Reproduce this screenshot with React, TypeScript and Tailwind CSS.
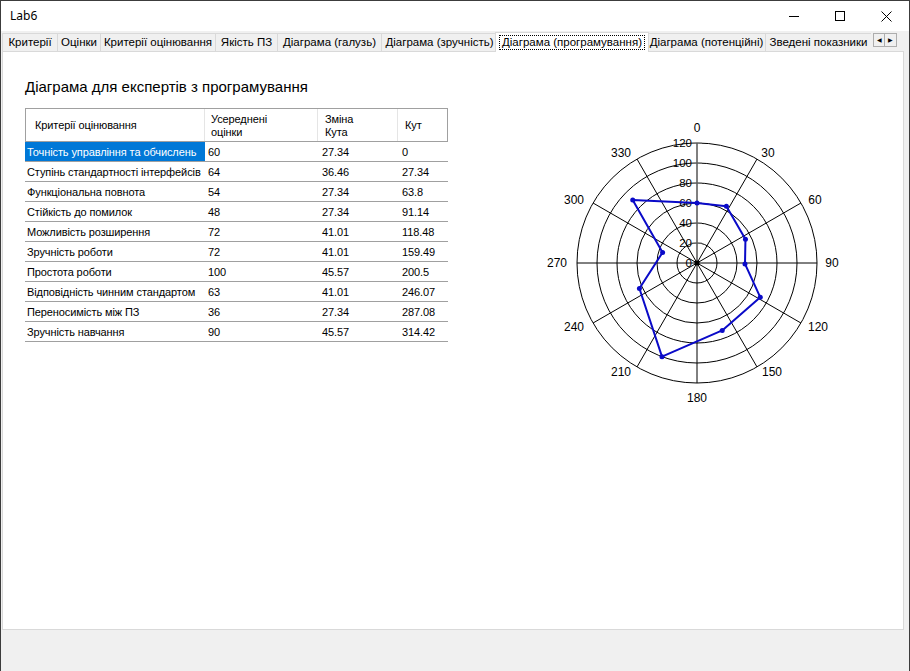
import React from "react";

const tabs = [
  { label: "Критерії", w: 55 },
  { label: "Оцінки", w: 43 },
  { label: "Критерії оцінювання", w: 115 },
  { label: "Якість ПЗ", w: 62 },
  { label: "Діаграма (галузь)", w: 104 },
  { label: "Діаграма (зручність)", w: 116 },
  { label: "Діаграма (програмування)", w: 150, active: true },
  { label: "Діаграма (потенційні)", w: 118 },
  { label: "Зведені показники", w: 106 },
];

const rows = [
  ["Точність управління та обчислень", "60", "27.34", "0"],
  ["Ступінь стандартності інтерфейсів", "64", "36.46", "27.34"],
  ["Функціональна повнота", "54", "27.34", "63.8"],
  ["Стійкість до помилок", "48", "27.34", "91.14"],
  ["Можливість розширення", "72", "41.01", "118.48"],
  ["Зручність роботи", "72", "41.01", "159.49"],
  ["Простота роботи", "100", "45.57", "200.5"],
  ["Відповідність чинним стандартом", "63", "41.01", "246.07"],
  ["Переносимість між ПЗ", "36", "27.34", "287.08"],
  ["Зручність навчання", "90", "45.57", "314.42"],
];

// chart origin inside svg
const CX = 157;
const CY = 155;

const axisLabels: [string, number, number][] = [
  ["0", 697, 128],
  ["30", 768, 153],
  ["60", 815, 200],
  ["90", 832, 263],
  ["120", 818, 327],
  ["150", 772, 372],
  ["180", 697, 398],
  ["210", 621, 372],
  ["240", 574, 327],
  ["270", 557, 263],
  ["300", 574, 200],
  ["330", 621, 153],
];

const PolarChart = () => {
  const pts = rows.map((r) => {
    const v = parseFloat(r[1]);
    const a = (parseFloat(r[3]) * Math.PI) / 180;
    return [CX + v * Math.sin(a), CY - v * Math.cos(a)];
  });
  const poly = pts.map((p) => p.join(",")).join(" ");
  return (
    <svg width="330" height="300" viewBox="0 0 330 300" className="shrink-0" style={{ fontFamily: '"Liberation Sans", Arial, sans-serif' }}>
      {[20, 40, 60, 80, 100, 120].map((r) => (
        <circle key={r} cx={CX} cy={CY} r={r} fill="none" stroke="#000" strokeWidth="1" />
      ))}
      {Array.from({ length: 12 }).map((_, i) => {
        const a = (i * 30 * Math.PI) / 180;
        return (
          <line key={i} x1={CX} y1={CY} x2={CX + 120 * Math.sin(a)} y2={CY - 120 * Math.cos(a)} stroke="#000" strokeWidth="1" />
        );
      })}
      {[0, 20, 40, 60, 80, 100, 120].map((r) => (
        <g key={r}>
          <line x1={CX - 7} y1={CY - r} x2={CX + 5} y2={CY - r} stroke="#8a8a8a" strokeWidth="1" />
          <text x={CX - 5} y={CY - r} fontSize="11.5" textAnchor="end" dominantBaseline="central" fill="#000">
            {r}
          </text>
        </g>
      ))}
      {axisLabels.map(([t, x, y]) => (
        <text key={t} x={x - 540} y={y - 108} fontSize="12" textAnchor="middle" dominantBaseline="central" fill="#000">
          {t}
        </text>
      ))}
      <polygon points={poly} fill="none" stroke="#0a0ac8" strokeWidth="2" strokeLinejoin="round" />
      {pts.map((p, i) => (
        <circle key={i} cx={p[0]} cy={p[1]} r="2.5" fill="#0a0ac8" />
      ))}
      <circle cx={CX} cy={CY} r="2.5" fill="#000" />
    </svg>
  );
};

const App = () => {
  return (
    <div
      className="w-[910px] h-[671px] bg-[#f0f0f0] border-x border-t border-[#3c3c3c] flex flex-col overflow-hidden text-black"
      style={{ fontFamily: '"Liberation Sans", Arial, sans-serif' }}
    >
      {/* title bar */}
      <div className="h-[30px] bg-white flex items-center shrink-0">
        <span className="pl-[9px] text-[12px] text-black" style={{ fontFamily: '"Noto Sans", "Open Sans", sans-serif' }}>
          Lab6
        </span>
        <div className="ml-auto flex h-full">
          <div className="w-[46px] h-full flex items-center justify-center">
            <div className="w-[10px] h-px bg-black" />
          </div>
          <div className="w-[46px] h-full flex items-center justify-center">
            <div className="w-[10px] h-[10px] border border-black" />
          </div>
          <div className="w-[46px] h-full flex items-center justify-center">
            <svg width="11" height="11" viewBox="0 0 11 11">
              <path d="M0.5 0.5 L10.5 10.5 M10.5 0.5 L0.5 10.5" stroke="#000" strokeWidth="1" />
            </svg>
          </div>
        </div>
      </div>

      {/* tab strip */}
      <div className="h-[20px] flex items-end pl-px shrink-0 relative">
        {tabs.map((t) =>
          t.active ? (
            <div
              key={t.label}
              className="h-[20px] bg-white border-x border-t border-[#d9d9d9] flex items-start justify-center pt-[2px] -mx-[2px] relative z-10 -mb-px"
              style={{ width: t.w + 4 }}
            >
              <span className="border border-dotted border-black px-[2px] text-[11.5px] leading-[13px] whitespace-nowrap">{t.label}</span>
            </div>
          ) : (
            <div
              key={t.label}
              className="h-[18px] bg-[#f0f0f0] border-l border-t border-[#d9d9d9] flex items-center justify-center pt-px text-[11.5px] whitespace-nowrap"
              style={{ width: t.w }}
            >
              {t.label}
            </div>
          )
        )}
        <div className="ml-[2px] mb-[4px] flex self-end">
          <div className="w-[12px] h-[14px] border border-[#adadad] bg-[#f0f0f0] flex items-center justify-center text-[6px] leading-none">◀</div>
          <div className="w-[12px] h-[14px] border border-l-0 border-[#adadad] bg-[#f0f0f0] flex items-center justify-center text-[6px] leading-none">▶</div>
        </div>
      </div>

      {/* tab page */}
      <div className="ml-px w-[902px] h-[579px] bg-white border border-[#d9d9d9] shrink-0 flex flex-col pl-[22px] pt-[26px]">
        <h1 className="text-[15px] leading-[18px] font-normal">Діаграма для експертів з програмування</h1>

        <div className="flex mt-[12px]">
          {/* grid table */}
          <div className="w-[423px] shrink-0 text-[11px] tracking-[-0.1px]">
            <div className="flex h-[34px] border-t border-x border-[#a0a0a0] border-b border-b-[#a0a0a0]">
              <div className="w-[179px] flex items-center pl-[9px] pt-px border-r border-[#e5e5e5]">Критерії оцінювання</div>
              <div className="w-[113px] flex items-center pl-[6px] pt-px leading-[13px] border-r border-[#e5e5e5]">
                Усереднені
                <br />
                оцінки
              </div>
              <div className="w-[80px] flex items-center pl-[7px] pt-px leading-[13px] border-r border-[#e5e5e5]">
                Зміна
                <br />
                Кута
              </div>
              <div className="flex-1 flex items-center pl-[7px] pt-px">Кут</div>
            </div>
            {rows.map((r, i) => (
              <div key={i} className="flex h-[20px] border-b border-[#a0a0a0]">
                <div
                  className={
                    "w-[180px] flex items-center pl-[2px] pt-px whitespace-nowrap " +
                    (i === 0 ? "bg-[#0078d7] text-white" : "")
                  }
                >
                  {r[0]}
                </div>
                <div className="w-[113px] flex items-center pl-[3px] pt-px">{r[1]}</div>
                <div className="w-[80px] flex items-center pl-[4px] pt-px">{r[2]}</div>
                <div className="flex-1 flex items-center pl-[4px] pt-px">{r[3]}</div>
              </div>
            ))}
          </div>

          <div className="ml-[92px]">
            <PolarChart />
          </div>
        </div>
      </div>
    </div>
  );
};

export default App;
